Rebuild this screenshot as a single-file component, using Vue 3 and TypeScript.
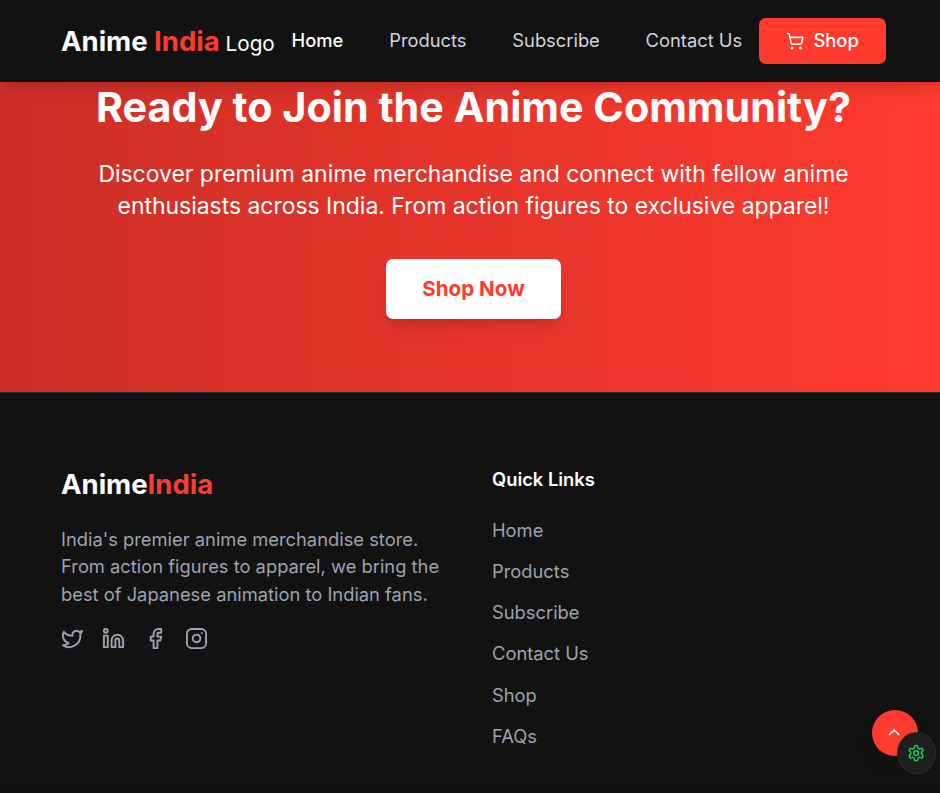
<script setup lang="ts">
const navLinks: string[] = ['Home', 'Products', 'Subscribe', 'Contact Us']
const quickLinks: string[] = ['Home', 'Products', 'Subscribe', 'Contact Us', 'Shop', 'FAQs']
const blurb: string[] = [
  "India's premier anime merchandise store.",
  'From action figures to apparel, we bring the',
  'best of Japanese animation to Indian fans.',
]
</script>

<template>
  <div class="viewport">
    <div class="page">
      <header class="header">
        <a class="brand"><span class="brand-name">Anime <span class="accent">India</span></span> <span class="brand-alt">Logo</span></a>
        <nav class="nav">
          <a v-for="(link, i) in navLinks" :key="link" class="nav-link" :class="{ active: i === 0 }">{{ link }}</a>
        </nav>
        <button class="shop" type="button">
          <svg class="cart" viewBox="0 0 24 24"><circle cx="8" cy="21" r="1" /><circle cx="19" cy="21" r="1" /><path d="M2.05 2.05h2l2.66 12.42a2 2 0 0 0 2 1.58h9.78a2 2 0 0 0 1.95-1.57l1.65-7.43H5.12" /></svg>
          <span>Shop</span>
        </button>
      </header>

      <section class="cta">
        <h2 class="cta-title">Ready to Join the Anime Community?</h2>
        <p class="cta-text">Discover premium anime merchandise and connect with fellow anime<br />enthusiasts across India. From action figures to exclusive apparel!</p>
        <button class="cta-button" type="button">Shop Now</button>
      </section>

      <footer class="footer">
        <div class="about">
          <div class="footer-brand">Anime<span class="accent">India</span></div>
          <p class="blurb"><span v-for="line in blurb" :key="line">{{ line }}</span></p>
          <div class="social">
            <svg viewBox="0 0 24 24"><path d="M22 4s-.7 2.1-2 3.4c1.6 10-9.4 17.3-18 11.6 2.2.1 4.4-.6 6-2C3 15.5.5 9.6 3 5c2.2 2.6 5.6 4.1 9 4-.9-4.2 4-6.6 7-3.8 1.1 0 3-1.2 3-1.2z" /></svg>
            <svg viewBox="0 0 24 24"><path d="M16 8a6 6 0 0 1 6 6v7h-4v-7a2 2 0 0 0-4 0v7h-4v-7a6 6 0 0 1 6-6z" /><rect x="2" y="9" width="4" height="12" /><circle cx="4" cy="4" r="2" /></svg>
            <svg viewBox="0 0 24 24"><path d="M18 2h-3a5 5 0 0 0-5 5v3H7v4h3v8h4v-8h3l1-4h-4V7a1 1 0 0 1 1-1h3z" /></svg>
            <svg viewBox="0 0 24 24"><rect x="2" y="2" width="20" height="20" rx="5" /><path d="M16 11.37A4 4 0 1 1 12.63 8 4 4 0 0 1 16 11.37zM17.5 6.5h.01" /></svg>
          </div>
        </div>
        <div class="links">
          <h3 class="links-title">Quick Links</h3>
          <a v-for="link in quickLinks" :key="link" class="link">{{ link }}</a>
        </div>
      </footer>
    </div>

    <button class="to-top" type="button" aria-label="Back to top">
      <svg viewBox="0 0 24 24"><path d="m18 15-6-6-6 6" /></svg>
    </button>
    <button class="settings" type="button" aria-label="Settings">
      <svg viewBox="0 0 24 24"><path d="M12.22 2h-.44a2 2 0 0 0-2 2v.18a2 2 0 0 1-1 1.73l-.43.25a2 2 0 0 1-2 0l-.15-.08a2 2 0 0 0-2.73.73l-.22.38a2 2 0 0 0 .73 2.73l.15.1a2 2 0 0 1 1 1.72v.51a2 2 0 0 1-1 1.74l-.15.09a2 2 0 0 0-.73 2.73l.22.38a2 2 0 0 0 2.73.73l.15-.08a2 2 0 0 1 2 0l.43.25a2 2 0 0 1 1 1.73V20a2 2 0 0 0 2 2h.44a2 2 0 0 0 2-2v-.18a2 2 0 0 1 1-1.73l.43-.25a2 2 0 0 1 2 0l.15.08a2 2 0 0 0 2.73-.73l.22-.39a2 2 0 0 0-.73-2.73l-.15-.08a2 2 0 0 1-1-1.74v-.5a2 2 0 0 1 1-1.74l.15-.09a2 2 0 0 0 .73-2.73l-.22-.38a2 2 0 0 0-2.73-.73l-.15.08a2 2 0 0 1-2 0l-.43-.25a2 2 0 0 1-1-1.73V4a2 2 0 0 0-2-2z" /><circle cx="12" cy="12" r="3" /></svg>
    </button>
  </div>
</template>

<style>
body {
  margin: 0;
  background: #0a0f1c;
}
</style>

<style scoped>
* {
  box-sizing: border-box;
}
.viewport {
  position: relative;
  width: 940px;
  height: 793px;
  overflow: hidden;
  font-family: Inter, 'Liberation Sans', sans-serif;
  font-size: 18.33px;
  line-height: 27.5px;
  color: #fff;
}
.page {
  width: 947px;
}
h2, h3, p {
  margin: 0;
}
button {
  border: 0;
  padding: 0;
  font: inherit;
  color: inherit;
}
svg {
  display: block;
  fill: none;
  stroke: currentColor;
  stroke-width: 2;
  stroke-linecap: round;
  stroke-linejoin: round;
}
.accent {
  color: #ff3b30;
}
.header {
  position: relative;
  z-index: 1;
  display: flex;
  align-items: center;
  justify-content: space-between;
  height: 82px;
  padding: 0 61px 1px;
  background: #121212;
  border-top: 1px solid #15171e;
  box-shadow: 0 11px 17px -3px rgba(0, 0, 0, 0.1), 0 5px 7px -4px rgba(0, 0, 0, 0.1);
  white-space: nowrap;
}
.brand {
  padding-top: 2px;
  font-size: 20.7px;
  line-height: 36px;
}
.brand-name {
  font-size: 27.5px;
  font-weight: 700;
}
.nav {
  display: flex;
  gap: 45.8px;
}
.nav-link {
  color: #d1d5db;
}
.nav-link.active {
  color: #fff;
  font-weight: 500;
}
.shop {
  display: flex;
  align-items: center;
  justify-content: center;
  gap: 9px;
  width: 127px;
  height: 46px;
  border-radius: 7px;
  background: #ff3b30;
  font-weight: 500;
}
.cart {
  width: 18.3px;
  height: 18.3px;
}
.cta {
  display: flex;
  flex-direction: column;
  align-items: center;
  height: 310px;
  padding-top: 2px;
  background: linear-gradient(90deg, #cc2f26, #ff3b30);
  text-align: center;
  white-space: nowrap;
}
.cta-title {
  font-size: 41.28px;
  font-weight: 700;
  line-height: 46px;
}
.cta-text {
  margin-top: 28px;
  font-size: 22.93px;
  line-height: 32px;
}
.cta-button {
  width: 175px;
  height: 60px;
  margin-top: 37px;
  border-radius: 7px;
  background: #fff;
  color: #ff3b30;
  font-size: 20.6px;
  font-weight: 700;
  box-shadow: 0 11px 17px -3px rgba(0, 0, 0, 0.1), 0 5px 7px -4px rgba(0, 0, 0, 0.1);
}
.footer {
  display: grid;
  grid-template-columns: 385px 1fr;
  column-gap: 46px;
  height: 399px;
  padding: 73px 61px 0;
  background: #121212;
  border-top: 1px solid #2e2e2e;
  white-space: nowrap;
}
.footer-brand {
  font-size: 27.5px;
  font-weight: 700;
  line-height: 36.6px;
}
.blurb {
  display: grid;
  margin-top: 23px;
  color: #9ca3af;
}
.social {
  display: flex;
  gap: 18.4px;
  margin-top: 18.5px;
  color: #9ca3af;
}
.social svg {
  width: 23px;
  height: 23px;
}
.links {
  display: flex;
  flex-direction: column;
  gap: 13.75px;
}
.links-title {
  margin-bottom: 9.3px;
  font-size: 18.33px;
  font-weight: 600;
}
.link {
  color: #9ca3af;
}
.to-top,
.settings {
  position: absolute;
  z-index: 2;
  display: grid;
  place-items: center;
  border-radius: 50%;
}
.to-top {
  left: 872px;
  top: 710px;
  width: 46px;
  height: 46px;
  padding: 0 2px 2px 0;
  background: #ff3b30;
  box-shadow: 0 11px 17px -3px rgba(0, 0, 0, 0.1);
}
.to-top svg {
  width: 18.3px;
  height: 18.3px;
}
.settings {
  left: 897px;
  top: 732px;
  width: 39px;
  height: 42px;
  border: 1px solid #2c2c2c;
  background: #1e1e1e;
  color: #22c55e;
}
.settings svg {
  width: 18.3px;
  height: 18.3px;
}
</style>
